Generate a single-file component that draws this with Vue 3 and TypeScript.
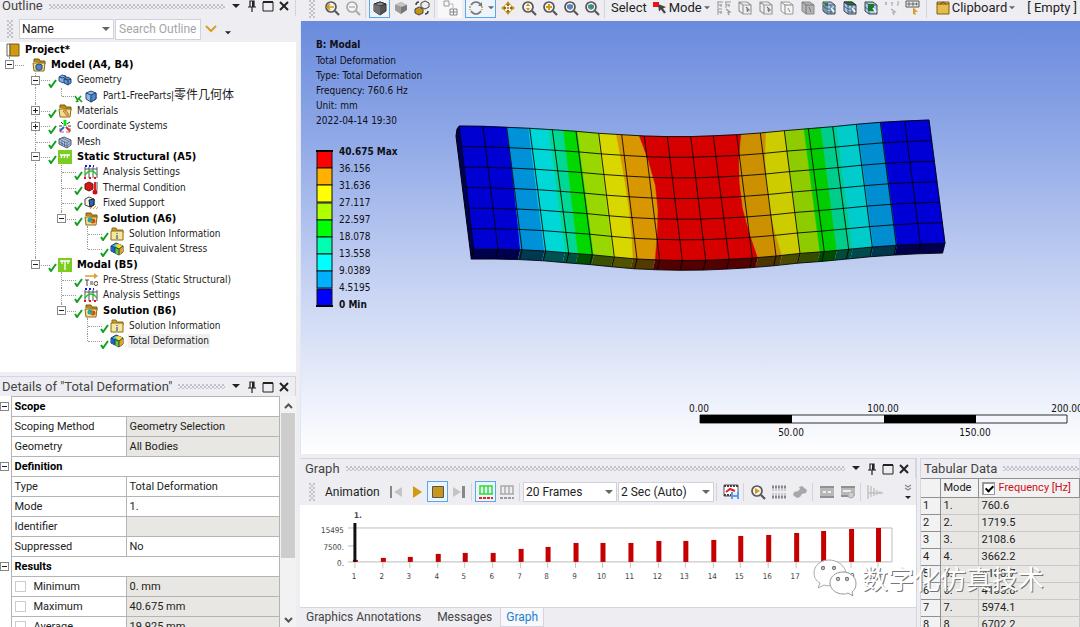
<script setup lang="ts">
interface TreeNode {
  label: string
  cjk?: string
  icon: string
  level: number
  bold?: boolean
  toggle?: '+' | '-'
  mark?: 'check' | 'cross'
  last?: boolean
  rails?: number[]
  selected?: boolean
}

const tree: TreeNode[] = [
  { label: 'Project*', icon: 'project', level: 0, bold: true },
  { label: 'Model (A4, B4)', icon: 'folder-cube', level: 1, bold: true, toggle: '-', last: true },
  { label: 'Geometry', icon: 'geometry', level: 2, toggle: '-', mark: 'check' },
  { label: 'Part1-FreeParts|', cjk: '零件几何体', icon: 'part', level: 3, mark: 'cross', last: true, rails: [2] },
  { label: 'Materials', icon: 'materials', level: 2, toggle: '+', mark: 'check' },
  { label: 'Coordinate Systems', icon: 'axes', level: 2, toggle: '+', mark: 'check' },
  { label: 'Mesh', icon: 'mesh', level: 2, mark: 'check' },
  { label: 'Static Structural (A5)', icon: 'static', level: 2, bold: true, toggle: '-', mark: 'check' },
  { label: 'Analysis Settings', icon: 'settings', level: 3, mark: 'check', rails: [2] },
  { label: 'Thermal Condition', icon: 'thermal', level: 3, mark: 'check', rails: [2] },
  { label: 'Fixed Support', icon: 'support', level: 3, mark: 'check', rails: [2] },
  { label: 'Solution (A6)', icon: 'solution', level: 3, bold: true, toggle: '-', mark: 'check', last: true, rails: [2] },
  { label: 'Solution Information', icon: 'info', level: 4, mark: 'check', rails: [2] },
  { label: 'Equivalent Stress', icon: 'result', level: 4, mark: 'check', last: true, rails: [2] },
  { label: 'Modal (B5)', icon: 'modal', level: 2, bold: true, toggle: '-', mark: 'check', last: true },
  { label: 'Pre-Stress (Static Structural)', icon: 'prestress', level: 3, mark: 'check' },
  { label: 'Analysis Settings', icon: 'settings', level: 3, mark: 'check' },
  { label: 'Solution (B6)', icon: 'solution', level: 3, bold: true, toggle: '-', mark: 'check', last: true },
  { label: 'Solution Information', icon: 'info', level: 4, mark: 'check' },
  { label: 'Total Deformation', icon: 'result', level: 4, mark: 'check', last: true, selected: true },
]

interface DetailRow {
  name: string
  value?: string
  group?: boolean
  shaded?: boolean
  check?: boolean
}

const details: DetailRow[] = [
  { name: 'Scope', group: true },
  { name: 'Scoping Method', value: 'Geometry Selection', shaded: true },
  { name: 'Geometry', value: 'All Bodies', shaded: true },
  { name: 'Definition', group: true },
  { name: 'Type', value: 'Total Deformation' },
  { name: 'Mode', value: '1.' },
  { name: 'Identifier', value: '', shaded: true },
  { name: 'Suppressed', value: 'No' },
  { name: 'Results', group: true },
  { name: 'Minimum', value: '0. mm', shaded: true, check: true },
  { name: 'Maximum', value: '40.675 mm', shaded: true, check: true },
  { name: 'Average', value: '19.925 mm', shaded: true, check: true },
]

const legendColors = ['#ff0000', '#ffb000', '#ffff00', '#b0ff00', '#00ff00', '#00ffb0', '#00ffff', '#00b0ff', '#0000ff']
const legendLabels = ['40.675 Max', '36.156', '31.636', '27.117', '22.597', '18.078', '13.558', '9.0389', '4.5195', '0 Min']

const frequencies = ['760.6', '1719.5', '2108.6', '3662.2', '4108.7', '4135.8', '5974.1', '6702.2']
const barHeights = [2, 4, 5, 8, 9, 9, 13, 15, 19, 19, 19, 21, 21, 22, 26, 27, 29, 31, 33, 34]
const bars = barHeights.map((h, i) => ({ n: i + 1, h, x: Math.round(55 + i * 27.6) }))

const viewTools = ['zoom-fit', 'zoom-out-gray', '|', 'cube-dark*', 'cube-gray', 'cubes', '|']
const zoomTools = ['pan', 'zoom-y', 'zoom-plus', 'zoom-blue', 'zoom-green', '|']
const selectTools = ['filters', 'box-a', 'box-a', 'box-b', 'box-solid', 'box-blue', 'box-top', 'box-mid', 'xyz', 'label', '|']
const playTools = ['prev', 'play', 'stop*', 'next', '|', 'dist-green*', 'dist-gray', '|']
const exportTools = ['video', '|', 'zoom-play', 'film', 'iron', '|', 'clip', 'clip-zoom', '|', 'decay']

type Point = [number, number]

const topX = [459.3, 483, 506.7, 529.7, 552.3, 576, 598.7, 621.7, 644.3, 667.3, 690.7, 713.3, 736.7, 760.3, 784.3, 808.3, 832.7, 856.3, 880.3, 904.7, 929]
const topY = [126, 126.3, 127.3, 128.3, 129.7, 131.3, 133.3, 134.7, 136, 136.6, 136.6, 135.8, 134.7, 133, 130.7, 128.7, 126.7, 124.3, 122.3, 121, 120]
const botX = [473.7, 498, 522, 545.7, 568.7, 592.3, 614.3, 637, 659.7, 682.3, 705.7, 729, 752.3, 776, 800, 824.3, 848.7, 872.3, 896.3, 920.3, 945]
const botY = [249.3, 249.3, 249.8, 251, 253, 254.8, 257, 259, 260, 260.5, 260.3, 259.3, 258, 256, 253.4, 251.6, 249.3, 247, 245.3, 244, 243.3]

function at(list: number[], u: number): number {
  const i = Math.min(Math.floor(u), list.length - 2)
  return list[i] + (list[i + 1] - list[i]) * (u - i)
}
function face(u: number, v: number): Point {
  return [at(topX, u) * (1 - v) + at(botX, u) * v, at(topY, u) * (1 - v) + at(botY, u) * v]
}
function underside(u: number): Point {
  const p = face(u, 1)
  return [p[0] - 2.4, p[1] + 9.8]
}
function steps(a: number, b: number): number[] {
  const out = [a]
  for (let i = Math.floor(a) + 1; i < b; i++) out.push(i)
  out.push(b)
  return out
}
function toPath(points: Point[], close = true): string {
  return 'M' + points.map((p) => p[0].toFixed(1) + ' ' + p[1].toFixed(1)).join('L') + (close ? 'Z' : '')
}

const flat = (u: number) => [u, u, u, u, u, u]
const edges: number[][] = [
  flat(0),
  [2, 2, 2, 1.98, 1.96, 1.93],
  flat(2.95),
  flat(3.84),
  [4.47, 4.46, 4.44, 4.42, 4.41, 4.4],
  flat(5.07),
  flat(5.97),
  [6.77, 6.84, 6.9, 6.92, 6.9, 6.83],
  [7.78, 8.05, 8.22, 8.2, 8.03, 7.8],
  [12.2, 11.97, 11.87, 11.87, 12.02, 12.24],
  [13.24, 13.08, 13, 13, 13.08, 13.25],
  flat(14.02),
  flat(14.82),
  flat(15.52),
  flat(16.17),
  flat(17.04),
  flat(18.03),
  flat(20),
]
const faceColors = ['#0000d2', '#0092d8', '#00d8d8', '#00d894', '#00d800', '#98d800', '#d8d800', '#d89600', '#d60000', '#cc9000', '#cccc00', '#8ecc00', '#00cc00', '#00cc8c', '#00cccc', '#008ed0', '#0000d6']
const sideColors = ['#00004c', '#003a52', '#005252', '#005240', '#005200', '#3a5200', '#525200', '#523a00', '#520000', '#4c3600', '#4c4c00', '#364c00', '#004c00', '#004c3a', '#004c4c', '#00364c', '#00004c']

const bands = faceColors.map((color, i) => {
  const a = edges[i]
  const b = edges[i + 1]
  const top = steps(a[0], b[0]).map((u) => face(u, 0))
  const right = b.map((u, k) => face(u, k / 5))
  const bottomSteps = steps(a[5], b[5])
  const bottom = bottomSteps.map((u) => face(u, 1))
  const left = a.map((u, k) => face(u, k / 5)).reverse()
  return {
    color,
    side: sideColors[i],
    face: toPath([...top, ...right, ...[...bottom].reverse(), ...left]),
    under: toPath([...bottom, ...bottomSteps.map(underside).reverse()]),
  }
})
const nodes = steps(0, 20)
const meshLines = [
  ...nodes.map((u) => toPath([face(u, 0), face(u, 1), underside(u)], false)),
  ...[0, 1, 2, 3, 4, 5, 6].map((r) => toPath(nodes.map((u) => face(u, r / 6)), false)),
  toPath(nodes.map(underside), false),
]
const endCap = toPath([face(0, 0), [457, 129], [456, 136], underside(0), face(0, 1)])
</script>

<template>
  <div class="app">
    <svg class="sprite" aria-hidden="true">
      <defs>
        <symbol id="project" viewBox="0 0 14 14"><path d="M1 1h3v12H1z" fill="#fff" stroke="#666" /><path d="M4 1h9v12H4z" fill="#cf9a10" stroke="#7a5a10" /></symbol>
        <symbol id="folder" viewBox="0 0 14 14"><path d="M2 4V1h5l1 2h5v3" fill="#c08a10" stroke="#7a5a10" /><path d="M1 5h12l-1 8H2z" fill="#f4e08a" stroke="#8a6a18" /></symbol>
        <symbol id="cube" viewBox="0 0 14 14"><path d="M2 4l5-2 5 2v6l-5 3-5-3z" fill="#8db8ea" stroke="#2b4a72" /><path d="M2 4l5 2 5-2M7 6v7" fill="none" stroke="#2b4a72" /><path d="M7 6l5-2v6l-5 3z" fill="#4c86cc" stroke="#2b4a72" /></symbol>
        <symbol id="folder-cube" viewBox="0 0 14 14"><use href="#folder" /><path d="M4 7l3-1 3 1v4l-3 1.500-3-1.500z" fill="#4c86cc" stroke="#2b4a72" /></symbol>
        <symbol id="geometry" viewBox="0 0 14 14"><path d="M1 4l3-2 4 1v5l-3 2-4-2z" fill="#7fb0e8" stroke="#34557f" /><path d="M6 6l4-2 3 2v4l-3 2-4-2z" fill="#5a92d6" stroke="#27456c" /><path d="M1 4l4 1 3-2M6 6l4 1 3-1M10 7v5" fill="none" stroke="#27456c" /></symbol>
        <symbol id="part" viewBox="0 0 14 14"><use href="#cube" /></symbol>
        <symbol id="materials" viewBox="0 0 14 14"><use href="#folder" /><path d="M5 7l3-1 3 5-2 1z" fill="#e8a060" stroke="#a06020" stroke-width=".6" /></symbol>
        <symbol id="axes" viewBox="0 0 14 14"><path d="M3 3l2 2M12 3L9 5M1 7h3M10 7h3" stroke="#333" /><path d="M7 7V1" stroke="#10e020" stroke-width="3" /><path d="M8 8l4 4" stroke="#e02020" stroke-width="2" /><path d="M6 8l-4 4" stroke="#2060e0" stroke-width="2" /><path d="M12 9v4H8M2 9v4h4" fill="none" stroke="#b04040" stroke-width=".8" /></symbol>
        <symbol id="mesh" viewBox="0 0 14 14"><path d="M1 4l5-2 7 3v5l-4 3-8-4z" fill="#b7cbe4" stroke="#4a5c78" /><path d="M1 4l8 4 4-3M9 8v5M4 3l7 3.500M4 5.500v5M1 7l8 4 4-3.500M6.500 7v5" fill="none" stroke="#4a5c78" stroke-width=".8" /></symbol>
        <symbol id="static" viewBox="0 0 14 14"><path d="M0 0h14v14H0z" fill="#7ccc22" /><path d="M2 5h10M3 8l1-3M6 8l1-3M9 8l1-3" stroke="#fff" stroke-width="1.300" /></symbol>
        <symbol id="modal" viewBox="0 0 14 14"><path d="M0 0h14v14H0z" fill="#7ccc22" /><path d="M2 3h10M7 3v9M4 3v3M10 3v3" stroke="#fff" stroke-width="1.300" /></symbol>
        <symbol id="settings" viewBox="0 0 14 14"><path d="M1 2v11M5 2v11M9 2v11M13 2v11M1 4h12" stroke="#555" /><path d="M1 10q6-8 12 0" fill="none" stroke="#18c828" stroke-width="1.500" /><path d="M1 1h9" stroke="#1010f0" stroke-width="2" stroke-dasharray="2 2" /><path d="M0 13h14" stroke="#f01010" stroke-width="2" stroke-dasharray="2 3" /></symbol>
        <symbol id="thermal" viewBox="0 0 14 14"><path d="M1 3l4-2 4 2v5l-4 2-4-2z" fill="#d01818" stroke="#701010" /><path d="M11 1v9" stroke="#e02020" stroke-width="2" /><circle cx="11" cy="11" r="2.500" fill="#d01010" /><path d="M13 1v8" stroke="#555" /></symbol>
        <symbol id="support" viewBox="0 0 14 14"><path d="M1 3l4-2 5 2v6l-4 2-5-2z" fill="#f4f4f4" stroke="#444" /><path d="M5 4l5-1v6l-4 2z" fill="#2468c0" stroke="#222" /><path d="M6 13l3-3M9 13l3-3M12 13l2-2" stroke="#d89a20" /></symbol>
        <symbol id="solution" viewBox="0 0 14 14"><use href="#folder" /><circle cx="6" cy="8" r="2.500" fill="#20a0c8" /><circle cx="9" cy="9" r="2.500" fill="#e04818" /><path d="M5 10l3-3 1 3z" fill="#30c030" /></symbol>
        <symbol id="info" viewBox="0 0 14 14"><path d="M2 4V1h4l1 2h6v3" fill="#d0a020" stroke="#8a6a18" /><path d="M1 4h12v9H1z" fill="#f8e69a" stroke="#8a6a18" /><path d="M7 6v1M7 8v4" stroke="#3080c0" stroke-width="1.500" /></symbol>
        <symbol id="result" viewBox="0 0 14 14"><path d="M1 4l5-3 7 3v6l-4 3-8-4z" fill="#38b8d8" stroke="#22384a" /><path d="M1 4l4 2v5l-4-2z" fill="#2060d0" /><path d="M5 6l4 1v6l-4-2z" fill="#60d030" /><path d="M9 7l4-3v6l-4 3z" fill="#f0a010" /><path d="M5 3l4-1 4 2-4 3z" fill="#f0e030" /><path d="M1 4l8 3 4-3M9 7v6M5 5.500v5" fill="none" stroke="#22384a" stroke-width=".9" /></symbol>
        <symbol id="prestress" viewBox="0 0 14 14"><path d="M1 3h10" stroke="#d8a030" stroke-width="1.500" /><path d="M10 0l4 3-4 3z" fill="#d8a030" /><path d="M1 7h4M3 7v6M6 9h3M6 11h3" stroke="#444" /><circle cx="12" cy="10.500" r="2" fill="none" stroke="#444" /></symbol>
        <symbol id="check" viewBox="0 0 9 9"><path d="M1 5l2 3 5-7" fill="none" stroke="#12a020" stroke-width="2" /></symbol>
        <symbol id="cross" viewBox="0 0 9 9"><path d="M1 2l2 3 1 3M2 8l5-6M4 4l4 4" fill="none" stroke="#12a020" stroke-width="1.600" /></symbol>

        <symbol id="lens" viewBox="0 0 16 16"><circle cx="7" cy="7" r="5" fill="#f3f3f3" stroke="currentColor" stroke-width="1.700" /><path d="M11 11l4 4" stroke="currentColor" stroke-width="2.200" /></symbol>
        <symbol id="zoom-fit" viewBox="0 0 16 16"><use href="#lens" /><path d="M3 7h7M6 4L3 7l3 3" fill="none" stroke="#d09a10" stroke-width="1.600" /></symbol>
        <symbol id="zoom-out-gray" viewBox="0 0 16 16"><g color="#a8a8a8"><use href="#lens" /></g><path d="M4 7h6" stroke="#b8b8b8" stroke-width="1.500" /></symbol>
        <symbol id="cube-dark" viewBox="0 0 16 16"><path d="M2 4l6-2 6 2v7l-6 4-6-4z" fill="#555" stroke="#333" /><path d="M2 4l6 2 6-2-6-2z" fill="#8c8c8c" stroke="#333" /><path d="M2 4l6 2v9l-6-4z" fill="#707070" /></symbol>
        <symbol id="cube-gray" viewBox="0 0 16 16"><path d="M2 5l6-3 6 3v5l-6 4-6-4z" fill="#777" /><path d="M2 5l6-3 6 3-6 2z" fill="#c4c4c4" /><path d="M2 5l6 2v7l-6-4z" fill="#9c9c9c" /></symbol>
        <symbol id="cubes" viewBox="0 0 16 16"><path d="M7 3l4-2 4 2v4l-4 2-4-2z" fill="#eee" stroke="#444" /><path d="M1 9l4-2 4 2v4l-4 2-4-2z" fill="#c8921a" stroke="#444" /><path d="M2 5q0-3 3-3M14 11q0 3-3 3" fill="none" stroke="#444" stroke-width="1.500" /></symbol>
        <symbol id="tiles" viewBox="0 0 16 16"><path d="M2 1h5v5H2z" fill="none" stroke="#999" /><path d="M7 4h4v4" fill="none" stroke="#bbb" /><path d="M8 9h7v6H8zM8 12h7M11.500 9v6" fill="none" stroke="#888" /></symbol>
        <symbol id="rotate" viewBox="0 0 16 16"><path d="M3 5q2-3 5-3 3 0 5 3M13 11q-2 3-5 3-3 0-5-3" fill="none" stroke="#777" stroke-width="1.700" /><path d="M2 6v4M14 6v4" stroke="#d0a030" stroke-width="1.700" stroke-dasharray="2 1" /><path d="M14 2v4h-4z" fill="#777" /></symbol>
        <symbol id="pan" viewBox="0 0 16 16"><path d="M8 1l3 4H5zM8 15l3-4H5zM1 8l4-3v6zM15 8l-4-3v6zM7 7h2v2H7z" fill="#c8921a" /><path d="M7 4h2v2H7zM7 10h2v2H7zM4 7h2v2H4zM10 7h2v2h-2z" fill="#8a6a20" /></symbol>
        <symbol id="zoom-y" viewBox="0 0 16 16"><use href="#lens" /><path d="M7 3l2 3H5zM7 11L5 8h4z" fill="#d09a10" /></symbol>
        <symbol id="zoom-plus" viewBox="0 0 16 16"><use href="#lens" /><path d="M7 4v6M4 7h6" stroke="#d09a10" stroke-width="2" /></symbol>
        <symbol id="zoom-blue" viewBox="0 0 16 16"><use href="#lens" /><path d="M4 5l3-1 3 1v3l-3 2-3-2z" fill="#5a84c0" /></symbol>
        <symbol id="zoom-green" viewBox="0 0 16 16"><use href="#lens" /><path d="M4 5l3-1 3 1v3l-3 2-3-2z" fill="#5a84c0" /><path d="M6 5l3 1v3l-3-1z" fill="#20a830" /></symbol>
        <symbol id="cursor" viewBox="0 0 14 14"><path d="M0 1h6v5H0z" fill="#f01010" /><path d="M5 3l8 3-3 1.500 3 4-2 1-3-4-2 2z" fill="#444" /></symbol>
        <symbol id="filters" viewBox="0 0 16 16"><path d="M1 2h6M9 2h6M1 9h5M2 2v6M10 2v6M2 9v6M5 4v3M13 4v3M5 11v3M2 5h4M10 5h4M2 12h4" stroke="#999" /><path d="M10 9l4 3-2 .5 1 2.500" fill="none" stroke="#999" stroke-width="1.300" /></symbol>
        <symbol id="box-a" viewBox="0 0 16 16"><path d="M2 2h8l4 3v9H6l-4-3zM2 2l4 3h8M6 5v9" fill="none" stroke="#999" stroke-width="1.200" /><path d="M9 7l3 3-2 0 1 2" fill="none" stroke="#777" stroke-width="1.200" /></symbol>
        <symbol id="box-b" viewBox="0 0 16 16"><path d="M2 2h8l4 3v9H6l-4-3z" fill="#f4f4f4" stroke="#999" /><path d="M2 2l4 3h8M6 5v9M9 8l2 4" fill="none" stroke="#888" /></symbol>
        <symbol id="box-solid" viewBox="0 0 16 16"><path d="M2 2h8l4 3v9H6l-4-3z" fill="#b4b4b4" stroke="#888" /><path d="M2 2l4 3h8M6 5v9M9 7l2 5" fill="none" stroke="#777" /></symbol>
        <symbol id="box-blue" viewBox="0 0 16 16"><path d="M2 2h8l4 3v9H6l-4-3z" fill="#a4c8f0" stroke="#444" /><path d="M2 2l4 3h8M6 5v9M2 6l4 3h8M10 5v9M4 3v10M6 12h8" fill="none" stroke="#456" stroke-width=".9" /><path d="M4 3h3v3H4z" fill="#208030" /><path d="M10 8l3 4" stroke="#fff" stroke-width="1.500" /></symbol>
        <symbol id="box-top" viewBox="0 0 16 16"><path d="M2 2h8l4 3v9H6l-4-3z" fill="#a4c8f0" stroke="#444" /><path d="M6 5v9M10 5v9M6 9h8M6 12h8M2 6l4 3" stroke="#456" stroke-width=".9" /><path d="M2 2h8l4 3H6z" fill="#187828" stroke="#333" /><path d="M10 8l3 4" stroke="#fff" stroke-width="1.500" /></symbol>
        <symbol id="box-mid" viewBox="0 0 16 16"><path d="M2 2h8l4 3v9H6l-4-3z" fill="#a4c8f0" stroke="#444" /><path d="M2 2l4 3h8M6 5v9M2 7l4 3" fill="none" stroke="#456" stroke-width=".9" /><path d="M5 4h6v7H5z" fill="#187828" /><path d="M10 8l3 4" stroke="#fff" stroke-width="1.500" /></symbol>
        <symbol id="xyz" viewBox="0 0 16 16"><path d="M1 2l2 3M3 2L1 5M7 2l1 2 1-2M8 4v2M13 2h2l-2 3h2" fill="none" stroke="#b0b0b0" /><path d="M7 9l4 3-2 .5 1 2.500" fill="none" stroke="#b0b0b0" stroke-width="1.500" /></symbol>
        <symbol id="label" viewBox="0 0 16 16"><path d="M1 1h13v6H1z" fill="#eee" stroke="#555" /><path d="M3 3h2v2H3zM7 3h2v2H7zM11 3h1v2h-1z" fill="none" stroke="#666" /><path d="M8 7l5 5-3 0 1 3-3-1z" fill="#d8a020" /></symbol>
        <symbol id="clipboard" viewBox="0 0 14 14"><path d="M1 1h12v12H1z" fill="#e8bc48" stroke="#7a6020" /><path d="M1 3h12M4 3l3-2 3 2" fill="none" stroke="#6a5020" /></symbol>

        <symbol id="prev" viewBox="0 0 16 16"><path d="M2 2h2v12H2z" fill="#888" /><path d="M14 3v10L6 8z" fill="#c4c4c4" /></symbol>
        <symbol id="play" viewBox="0 0 16 16"><path d="M4 2l9 6-9 6z" fill="#d09a10" /></symbol>
        <symbol id="stop" viewBox="0 0 16 16"><path d="M2.500 2.500h11v11h-11z" fill="#c8961a" stroke="#555" /></symbol>
        <symbol id="next" viewBox="0 0 16 16"><path d="M2 3v10l8-5z" fill="#c4c4c4" /><path d="M11 2h3v12h-3z" fill="#888" /></symbol>
        <symbol id="dist-green" viewBox="0 0 16 16"><path d="M2 2h12v8H2zM6 2v8M10 2v8M1 10h14" fill="none" stroke="#28e038" stroke-width="1.500" /><path d="M1 14h14" stroke="#f02020" stroke-width="2" stroke-dasharray="3 1" /></symbol>
        <symbol id="dist-gray" viewBox="0 0 16 16"><path d="M2 2h12v8H2zM6 2v8M10 2v8M1 10h14" fill="none" stroke="#aaa" stroke-width="1.500" /><path d="M1 14h14" stroke="#999" stroke-width="2" stroke-dasharray="3 1" /></symbol>
        <symbol id="video" viewBox="0 0 16 16"><path d="M1 1h14v11H1z" fill="#fff" stroke="#555" /><path d="M1 2h14M1 11h7" stroke="#444" stroke-width="2" stroke-dasharray="2 1" /><path d="M3 8l4-3 5 2" fill="none" stroke="#e02020" stroke-width="2" /><path d="M8 8h8v7H8z" fill="#5c9be8" /><path d="M10 8h4v3h-4zM10 13h4v2h-4z" fill="#e8f2ff" /></symbol>
        <symbol id="zoom-play" viewBox="0 0 16 16"><use href="#lens" /><path d="M5 4l5 3-5 3z" fill="#d09a10" /></symbol>
        <symbol id="film" viewBox="0 0 16 16"><path d="M1 3h15M1 13h15" stroke="#888" stroke-width="3" stroke-dasharray="2 1" /><path d="M1 6h15M1 10h15" stroke="#aaa" stroke-dasharray="2 1" /></symbol>
        <symbol id="iron" viewBox="0 0 16 16"><path d="M7 3l3-1 5 4-1 3-4 1-2 3-3 1-4-3 1-3 4-1 2-2z" fill="#a8a8a8" /></symbol>
        <symbol id="clip" viewBox="0 0 16 16"><path d="M1 2h14v12H1z" fill="#b8b8b8" /><path d="M1 3h14M1 13h14" stroke="#909090" stroke-width="2" /><path d="M4 8h8" stroke="#eee" stroke-width="2" stroke-dasharray="3 2" /></symbol>
        <symbol id="clip-zoom" viewBox="0 0 16 16"><path d="M1 2h14v10H1z" fill="#b8b8b8" /><path d="M1 3h14M1 12h8" stroke="#909090" stroke-width="2" /><path d="M3 7h8" stroke="#eee" stroke-width="2" /><circle cx="11" cy="11" r="3" fill="#ccc" stroke="#aaa" /></symbol>
        <symbol id="decay" viewBox="0 0 16 16"><path d="M1 1v14M4 2v11M7 4v8M10 6v5M13 7v3M1 9h15" stroke="#c0c0c0" stroke-width="1.400" /></symbol>
        <symbol id="caret" viewBox="0 0 8 5"><path d="M0 0h8L4 4z" fill="currentColor" /></symbol>
        <symbol id="pin" viewBox="0 0 10 12"><path d="M3 1h4v6H3zM1 7h8M5 7v5" fill="none" stroke="#222" stroke-width="1.200" /><path d="M6 1v6" stroke="#222" stroke-width="2" /></symbol>
        <symbol id="square" viewBox="0 0 12 12"><path d="M1 2h10v9H1z" fill="none" stroke="#222" /><path d="M1 2h10" stroke="#222" stroke-width="2" /></symbol>
        <symbol id="close" viewBox="0 0 10 10"><path d="M1 1l8 8M9 1L1 9" stroke="#222" stroke-width="2" /></symbol>
      </defs>
    </svg>

    <aside class="left">
      <section class="outline">
        <header class="title clipped">
          <h2>Outline</h2><span class="dots"></span>
          <button aria-label="Menu"><svg width="8" height="5"><use href="#caret" /></svg></button>
          <button aria-label="Pin"><svg width="10" height="12"><use href="#pin" /></svg></button>
          <button aria-label="Maximize"><svg width="12" height="12"><use href="#square" /></svg></button>
          <button aria-label="Close"><svg width="10" height="10"><use href="#close" /></svg></button>
        </header>
        <div class="filter">
          <span class="grip"></span>
          <span class="pick name"><select aria-label="Filter by"><option>Name</option></select><svg width="8" height="5"><use href="#caret" /></svg></span>
          <input class="search" type="text" placeholder="Search Outline" aria-label="Search Outline" />
          <button class="expand" aria-label="Expand search"><svg width="13" height="9" viewBox="0 0 13 9"><path d="M1 1l5 5 5-5" fill="none" stroke="#d8a020" stroke-width="2" /></svg></button>
          <button class="more" aria-label="More"><svg width="6" height="4"><use href="#caret" /></svg></button>
        </div>
        <div class="tree-area">
          <ul class="tree">
            <li v-for="(node, i) in tree" :key="i" class="node">
              <template v-if="node.level > 0">
                <span v-for="l in node.level - 1" :key="l" class="rail" :class="{ on: node.rails?.includes(l) }"></span>
                <span class="branch" :class="{ last: node.last }">
                  <button v-if="node.toggle" class="toggle" :class="{ plus: node.toggle === '+' }" :aria-label="'Toggle ' + node.label"></button>
                  <svg v-if="node.mark" class="mark" width="9" height="9"><use :href="'#' + node.mark" /></svg>
                </span>
              </template>
              <svg class="node-icon" :class="{ root: node.level === 0 }" width="14" height="14"><use :href="'#' + node.icon" /></svg>
              <span class="node-label" :class="{ bold: node.bold, selected: node.selected }">{{ node.label }}<span v-if="node.cjk" class="cjk">{{ node.cjk }}</span></span>
            </li>
          </ul>
        </div>
      </section>

      <section class="details">
        <header class="title">
          <h2>Details of "Total Deformation"</h2><span class="dots"></span>
          <button aria-label="Menu"><svg width="8" height="5"><use href="#caret" /></svg></button>
          <button aria-label="Pin"><svg width="10" height="12"><use href="#pin" /></svg></button>
          <button aria-label="Maximize"><svg width="12" height="12"><use href="#square" /></svg></button>
          <button aria-label="Close"><svg width="10" height="10"><use href="#close" /></svg></button>
        </header>
        <div class="details-body">
          <table class="props">
            <colgroup><col class="gutter" /><col class="key" /><col /></colgroup>
            <tbody>
              <tr v-for="row in details" :key="row.name">
                <td class="fold"><button v-if="row.group" class="toggle" :aria-label="'Toggle ' + row.name"></button></td>
                <th v-if="row.group" colspan="2" class="group">{{ row.name }}</th>
                <template v-else>
                  <td v-if="row.check"><label class="tick"><input type="checkbox" />{{ row.name }}</label></td>
                  <td v-else>{{ row.name }}</td>
                  <td :class="{ shaded: row.shaded }">{{ row.value }}</td>
                </template>
              </tr>
            </tbody>
          </table>
          <div class="scroll">
            <svg width="9" height="6" viewBox="0 0 9 6"><path d="M1 5l3.500-3.500L8 5" fill="none" stroke="#555" stroke-width="2" /></svg>
            <span class="thumb"></span>
            <svg width="9" height="6" viewBox="0 0 9 6"><path d="M1 1l3.500 3.500L8 1" fill="none" stroke="#555" stroke-width="2" /></svg>
          </div>
        </div>
      </section>
    </aside>

    <main class="right">
      <div class="toolbar top-bar">
        <span class="grip"></span>
        <template v-for="(t, i) in viewTools" :key="'v' + i">
          <span v-if="t === '|'" class="sep"></span>
          <button v-else class="tool" :class="{ active: t.endsWith('*') }" :aria-label="t.replace('*', '')"><svg width="16" height="16"><use :href="'#' + t.replace('*', '')" /></svg></button>
        </template>
        <button class="tool tiles" aria-label="tiles"><svg width="16" height="16"><use href="#tiles" /></svg></button>
        <button class="tool active rotate" aria-label="rotate"><svg width="16" height="16"><use href="#rotate" /></svg><svg width="6" height="4"><use href="#caret" /></svg></button>
        <template v-for="(t, i) in zoomTools" :key="'z' + i">
          <span v-if="t === '|'" class="sep"></span>
          <button v-else class="tool" :aria-label="t"><svg width="16" height="16"><use :href="'#' + t" /></svg></button>
        </template>
        <span class="word">Select</span>
        <button class="text-tool mode"><svg width="14" height="14"><use href="#cursor" /></svg>Mode<svg width="6" height="4"><use href="#caret" /></svg></button>
        <template v-for="(t, i) in selectTools" :key="'s' + i">
          <span v-if="t === '|'" class="sep"></span>
          <button v-else class="tool" :aria-label="t"><svg width="16" height="16"><use :href="'#' + t" /></svg></button>
        </template>
        <button class="text-tool clip-tool"><svg width="14" height="14"><use href="#clipboard" /></svg>Clipboard<svg width="6" height="4"><use href="#caret" /></svg></button>
        <span class="word empty">[ Empty ]</span>
      </div>

      <section class="viewport">
        <svg class="scene" viewBox="301 21 779 433" preserveAspectRatio="xMinYMin meet">
          <path :d="endCap" fill="#000058" stroke="#000" />
          <g v-for="(b, i) in bands" :key="i">
            <path :d="b.face" :fill="b.color" :stroke="b.color" stroke-width=".5" />
            <path :d="b.under" :fill="b.side" />
          </g>
          <path v-for="(d, i) in meshLines" :key="'m' + i" :d="d" fill="none" stroke="#000" stroke-opacity=".85" />
          <path d="M700 415h367v8H700z" fill="#f4f7fd" stroke="#333" />
          <path d="M700 415h92v8h-92zM884 415h92v8h-92z" fill="#000" />
          <g class="scale-text" text-anchor="middle">
            <text x="699" y="412">0.00</text><text x="883" y="412">100.00</text><text x="1067" y="412">200.00</text>
            <text x="791" y="436">50.00</text><text x="975" y="436">150.00</text>
          </g>
        </svg>
        <div class="annotation">
          <strong>B: Modal</strong><span>Total Deformation</span><span>Type: Total Deformation</span><span>Frequency: 760.6 Hz</span><span>Unit: mm</span><span>2022-04-14 19:30</span>
        </div>
        <div class="legend">
          <svg width="17" height="157" viewBox="0 0 17 157">
            <rect v-for="(c, i) in legendColors" :key="c" x="1" :y="1 + Math.round(i * 17.2)" width="15" height="17" :fill="c" stroke="#111" />
            <path d="M0 1h17M0 156h17" stroke="#000" stroke-width="2" />
          </svg>
          <ul><li v-for="l in legendLabels" :key="l">{{ l }}</li></ul>
        </div>
      </section>

      <div class="bottom">
        <section class="graph">
          <header class="title">
            <h2>Graph</h2><span class="dots"></span>
            <button aria-label="Menu"><svg width="8" height="5"><use href="#caret" /></svg></button>
            <button aria-label="Pin"><svg width="10" height="12"><use href="#pin" /></svg></button>
            <button aria-label="Maximize"><svg width="12" height="12"><use href="#square" /></svg></button>
            <button aria-label="Close"><svg width="10" height="10"><use href="#close" /></svg></button>
          </header>
          <div class="toolbar anim-bar">
            <span class="grip"></span>
            <span class="word anim">Animation</span>
            <template v-for="(t, i) in playTools" :key="'p' + i">
              <span v-if="t === '|'" class="sep"></span>
              <button v-else class="tool" :class="{ active: t.endsWith('*') }" :aria-label="t.replace('*', '')"><svg width="16" height="16"><use :href="'#' + t.replace('*', '')" /></svg></button>
            </template>
            <span class="pick frames"><select aria-label="Frames"><option>20 Frames</option></select><svg width="8" height="5"><use href="#caret" /></svg></span>
            <span class="pick secs"><select aria-label="Duration"><option>2 Sec (Auto)</option></select><svg width="8" height="5"><use href="#caret" /></svg></span>
            <span class="sep"></span>
            <template v-for="(t, i) in exportTools" :key="'e' + i">
              <span v-if="t === '|'" class="sep"></span>
              <button v-else class="tool" :aria-label="t"><svg width="16" height="16"><use :href="'#' + t" /></svg></button>
            </template>
            <button class="overflow" aria-label="More tools"><svg width="8" height="16" viewBox="0 0 8 16"><path d="M1 1l3 2 3-2M1 4l3 2 3-2" fill="none" stroke="#888" stroke-width="1.200" /><path d="M1 12h6l-3 3z" fill="#222" /></svg></button>
          </div>
          <div class="chart">
            <svg viewBox="0 0 617 102" preserveAspectRatio="xMinYMin meet">
              <path d="M48 23h545v34H48M48 41h8" fill="none" stroke="#bcbcbc" stroke-width="1" />
              <g v-for="b in bars" :key="b.n">
                <path :d="`M${b.x} 57v6`" stroke="#c4c4c4" />
                <rect :x="b.x - 2" :y="57 - b.h" width="5" :height="b.h" fill="#c40000" />
                <text :x="b.x - 1" y="74" text-anchor="middle">{{ b.n }}</text>
              </g>
              <path d="M55 18v39" stroke="#111" stroke-width="3" />
              <g text-anchor="end"><text x="44" y="28">15495</text><text x="44" y="45">7500.</text><text x="44" y="61">0.</text></g>
              <text class="bold" x="54" y="13">1.</text>
            </svg>
          </div>
          <nav class="tabs">
            <a href="#annotations">Graphics Annotations</a><a href="#messages">Messages</a><a href="#graph" class="current">Graph</a>
          </nav>
        </section>

        <section class="tabular">
          <header class="title"><h2>Tabular Data</h2><span class="dots"></span></header>
          <table class="data">
            <colgroup><col class="idx" /><col class="mode-col" /><col /></colgroup>
            <thead>
              <tr><th></th><th>Mode</th><th><label class="freq"><input type="checkbox" checked />Frequency [Hz]</label></th></tr>
            </thead>
            <tbody>
              <tr v-for="(f, i) in frequencies" :key="f"><th>{{ i + 1 }}</th><td>{{ i + 1 }}.</td><td>{{ f }}</td></tr>
            </tbody>
          </table>
        </section>
      </div>
    </main>

    <div class="watermark">
      <svg width="44" height="38" viewBox="0 0 44 38">
        <path d="M16 1C7 1 1 7 1 14c0 4 2 8 6 10l-2 5 6-3c2 1 6 1 8 0 0-8 6-13 14-13C31 6 24 1 16 1z" fill="#fff" stroke="#aaa" />
        <path d="M30 13c-8 0-13 5-13 11s6 11 13 11c2 0 3 0 5-1l5 3-1-4c3-2 4-5 4-9 0-6-6-11-13-11z" fill="#fff" stroke="#999" />
        <g fill="none" stroke="#777" stroke-width="1.300"><circle cx="10" cy="9" r="1.500" /><circle cx="21" cy="9" r="1.500" /><circle cx="25" cy="20" r="1.500" /><circle cx="34" cy="20" r="1.500" /></g>
      </svg>
      <span>数字化仿真技术</span>
    </div>
  </div>
</template>

<style>
html, body { margin: 0; background: #eeeef2; }
</style>

<style scoped>
* { box-sizing: border-box; }
.app {
  --ui: Roboto, "Noto Sans", "Noto Sans CJK SC", sans-serif;
  --small: "DejaVu Sans Condensed", "DejaVu Sans", "Noto Sans CJK SC", sans-serif;
  position: relative; display: flex; height: 100vh; overflow: hidden;
  background: #eeeef2; color: #222; font: 12px/16px var(--ui);
}
.sprite { position: absolute; width: 0; height: 0; }
button { border: 0; padding: 0; background: none; color: inherit; font: inherit; display: flex; align-items: center; justify-content: center; }
svg { display: block; flex: none; }
ul { list-style: none; margin: 0; padding: 0; }
.left { display: flex; flex-direction: column; gap: 4px; flex: 0 0 296px; min-width: 0; }
.right { display: flex; flex-direction: column; flex: 1; min-width: 0; margin-left: 4px; }

.title { display: flex; align-items: center; gap: 6px; height: 20px; padding: 0 6px 0 2px; border: 1px solid #d4d5e0; border-width: 1px 1px 0 0; flex: none; }
.title h2 { margin: 0; font: 13px/18px var(--ui); color: #444; white-space: nowrap; }
.title.clipped { height: 16px; border-top: 0; padding-bottom: 4px; }
.title button { width: 10px; height: 14px; }
.dots { flex: 1; height: 5px; background: radial-gradient(circle at 1px 1px, #c2c3ca 1px, transparent 1px) 0 0 / 4px 4px, radial-gradient(circle at 3px 3px, #c2c3ca 1px, transparent 1px) 0 0 / 4px 4px; }
.grip { width: 6px; height: 18px; flex: none; background: radial-gradient(circle at 1px 1px, #c2c3ca 1px, transparent 1px) 0 0 / 4px 4px, radial-gradient(circle at 3px 3px, #c2c3ca 1px, transparent 1px) 0 0 / 4px 4px; }

.outline { flex: 0 0 372px; display: flex; flex-direction: column; min-height: 0; }
.filter { display: flex; align-items: center; height: 26px; padding-left: 7px; flex: none; }
.pick { position: relative; display: block; height: 20px; border: 1px solid #d0d1da; background: #fff; }
.pick select { appearance: none; width: 100%; height: 100%; border: 0; padding: 0 2px; background: transparent; font: 12px/18px var(--ui); color: #222; }
.pick svg { position: absolute; right: 3px; top: 7px; color: #666; pointer-events: none; }
.pick.name { width: 95px; margin-left: 6px; }
.search { width: 86px; height: 21px; margin-left: 1px; border: 1px solid #d0d1da; padding: 0 3px; font: 12px/18px var(--ui); }
.search::placeholder { color: #a4a4a8; opacity: 1; }
.expand { width: 13px; margin-left: 4px; }
.more { margin: 8px 0 0 7px; }
.tree-area { flex: 1; background: #fff; min-height: 0; }
.tree { display: grid; grid-template-rows: repeat(20, 1fr); height: 307px; padding-left: 5px; font: 10px/14px var(--small); color: #1c1c1c; }
.node { display: flex; align-items: center; min-height: 0; white-space: nowrap; }
.rail { align-self: stretch; width: 22px; margin-left: 4px; }
.rail.on { border-left: 1px dotted #999; }
.branch { position: relative; align-self: stretch; width: 27px; flex: none; }
.branch::before { content: ""; position: absolute; left: 4px; top: 0; bottom: 0; border-left: 1px dotted #999; }
.branch.last::before { bottom: 50%; }
.branch::after { content: ""; position: absolute; left: 5px; width: 14px; top: 50%; border-top: 1px dotted #999; }
.toggle { position: relative; width: 9px; height: 9px; border: 1px solid #888; background: #fff linear-gradient(#222, #222) center / 5px 1px no-repeat; }
.toggle.plus { background: linear-gradient(#222, #222) center / 5px 1px no-repeat, linear-gradient(#222, #222) center / 1px 5px no-repeat, #fff; }
.branch .toggle { position: absolute; left: 0; top: 3px; z-index: 1; }
.mark { position: absolute; right: 1px; top: 6px; z-index: 1; }
.node-icon.root { margin-left: 1px; }
.node-label { margin-left: 4px; padding: 0 1px; }
.node-label.bold { font-weight: bold; font-size: 11px; color: #000; }
.node-label.selected { background: #f0f0f0; }
.cjk { font-size: 12px; }

.details { flex: 1; display: flex; flex-direction: column; min-height: 0; }
.details-body { display: flex; flex: 1; min-height: 0; overflow: hidden; background: #fff; }
.props { flex: 1; border-collapse: collapse; table-layout: fixed; width: 0; align-self: flex-start; font: 11px/19px var(--ui); }
.props .gutter { width: 11px; }
.props .key { width: 115px; }
.props td, .props th { height: 20px; padding: 0 3px; border: 1px solid #b4b4b4; text-align: left; white-space: nowrap; }
.props .fold { border: 0; padding: 0; }
.props .group { font-weight: bold; color: #000; }
.props .shaded { background: #e8e7e3; }
.tick { display: flex; align-items: center; gap: 8px; }
.tick input { appearance: none; width: 11px; height: 11px; margin: 0; border: 1px solid #ccc; background: #fff; }
.scroll { width: 16px; display: flex; flex-direction: column; align-items: center; justify-content: space-between; background: #f2f2f2; padding: 7px 0 4px; }
.thumb { width: 14px; flex: 0 0 145px; background: #cdcdcd; margin: 4px 0 auto; }

.toolbar { display: flex; align-items: center; flex: none; white-space: nowrap; }
.tool { width: 21px; height: 21px; flex: none; color: #555; }
.tool.active { border: 1px solid #5aa7ec; background: #eef4fb; }
.sep { width: 1px; height: 18px; margin: 0 3px 0 2px; background: #d4d5dc; flex: none; }
.top-bar { height: 21px; padding: 0 0 3px 9px; align-items: flex-end; overflow: hidden; font-size: 13px; }
.top-bar .grip { margin-right: 6px; }
.tool.tiles { width: 24px; background: #f8f8fa; margin-right: 3px; }
.tool.rotate { width: 31px; gap: 4px; margin-right: 1px; color: #666; }
.word { line-height: 20px; margin-left: 3px; }
.text-tool { gap: 2px; height: 20px; }
.text-tool svg:last-child { color: #666; }
.mode { margin: 0 4px 0 6px; }
.clip-tool { margin-left: 6px; }
.word.empty { margin-left: 12px; }

.viewport { position: relative; flex: 1; min-height: 0; overflow: hidden; border-left: 1px solid #dfe6f6; background: linear-gradient(#6a8bdd, #8ea7e6 26%, #c8d4f3 62%, #ffffff); padding: 15px; font: 10px/15px var(--small); color: #101018; }
.scene { position: absolute; left: 0; top: 0; width: 100%; }
.scale-text { font: 10px var(--small); fill: #111; }
.annotation { position: relative; display: flex; flex-direction: column; }
.annotation strong { line-height: 17px; }
.legend { position: relative; display: flex; gap: 6px; margin-top: 22px; }
.legend li { line-height: 17px; }
.legend ul { margin-top: -7px; }
.legend li:first-child, .legend li:last-child { font-weight: bold; }

.bottom { display: flex; flex: 0 0 169px; gap: 3px; margin-top: 4px; min-height: 0; }
.graph { flex: 1; min-width: 0; display: flex; flex-direction: column; border-right: 1px solid #d4d5e0; }
.graph .title { padding-left: 5px; }
.anim-bar { height: 27px; padding-left: 9px; }
.anim { width: 60px; margin-left: 10px; }
.frames { width: 94px; margin-right: 1px; }
.secs { width: 96px; }
.overflow { margin: 0 4px 0 auto; }
.chart { flex: 1; background: #fff; min-height: 0; overflow: hidden; }
.chart svg { width: 100%; }
.chart text { font: 8px var(--small); fill: #444; }
.chart text.bold { font-weight: bold; }
.tabs { display: flex; height: 20px; border-top: 1px solid #d4d5e0; }
.tabs a { color: #444; text-decoration: none; line-height: 18px; padding: 0 8px; }
.tabs a:first-child { padding-left: 6px; }
.tabs a.current { color: #1a80d0; background: #f8f8fb; border: 1px solid #d4d5e0; border-top: 0; padding: 0 5px; }
.tabular { flex: 0 0 160px; overflow: hidden; border-left: 1px solid #d4d5e0; }
.tabular .title { padding: 0 0 0 3px; }
.data { width: 100%; table-layout: fixed; border-collapse: collapse; font: 11px/16px var(--ui); white-space: nowrap; }
.data .idx { width: 19px; }
.data .mode-col { width: 38px; }
.data th, .data td { height: 17px; padding: 0 3px; text-align: left; font-weight: normal; border: 1px solid #c8c8c8; border-left-width: 0; }
.data td { background: #e8e7e3; }
.data th { background: #f2f2f2; border-color: #909090; }
.data th:first-child { padding: 0 2px; }
.data thead th { height: 19px; }
.freq { display: flex; align-items: center; gap: 4px; color: #d01018; }
.freq input { appearance: none; width: 13px; height: 13px; margin: 0; border: 1px solid #999; border-width: 2px 1px 1px 2px; background: #fff; flex: none; position: relative; }
.freq input:checked::after { content: ""; position: absolute; left: 3px; top: 0; width: 3px; height: 6px; border: solid #000; border-width: 0 2px 2px 0; transform: rotate(45deg); }

.watermark { position: absolute; right: 36px; bottom: 30px; display: flex; align-items: center; gap: 5px; color: #fff; font: 26px/38px "Noto Sans CJK SC", sans-serif; text-shadow: 1px 1px 0 #777; pointer-events: none; }
</style>
